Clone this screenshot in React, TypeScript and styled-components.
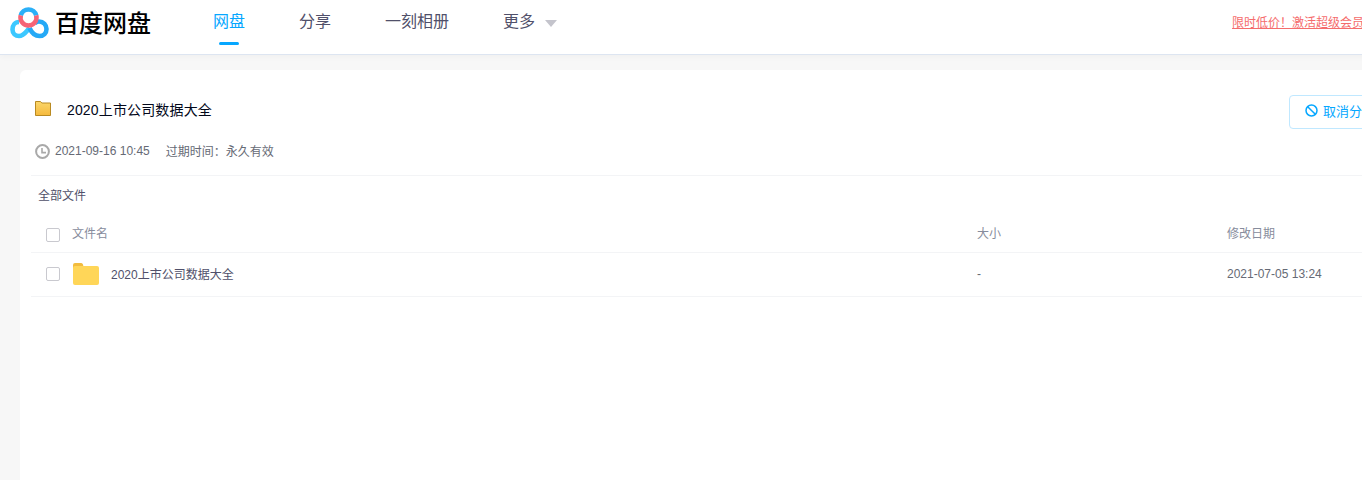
import styled, { createGlobalStyle } from "styled-components";

const CJK = `"Noto Sans CJK SC", "Liberation Sans", sans-serif`;
const MIXED = `"Liberation Sans", "Noto Sans CJK SC", sans-serif`;

const GlobalStyle = createGlobalStyle`
    html, body {
        margin: 0;
        height: 100%;
        overflow: hidden;
        background: #f7f7f7;
    }
`;

const Page = styled.div`
    width: 1440px;
    height: 480px;
    font-family: ${MIXED};
    background: #f7f7f7;
`;

const Header = styled.header`
    height: 54px;
    background: #fff;
    border-bottom: 1px solid #dde5f1;
    box-shadow: 0 2px 6px rgba(0, 0, 0, 0.03);
    display: flex;
    align-items: flex-start;
    padding-left: 10px;
`;

const Logo = styled.div`
    display: flex;
    align-items: center;
    gap: 6px;
    width: 203px;
    height: 46px;
`;

const LogoText = styled.span`
    margin-bottom: 3px;
    font-family: ${CJK};
    font-size: 24px;
    font-weight: 500;
    color: #000;
`;

const Nav = styled.nav`
    display: flex;
    gap: 54px;
`;

const NavItem = styled.a<{ $active?: boolean }>`
    position: relative;
    display: flex;
    align-items: center;
    height: 40px;
    font-family: ${CJK};
    font-size: 16px;
    color: ${p => (p.$active ? "#06a7ff" : "#50506a")};

    ${p =>
        p.$active &&
        `
        &::after {
            content: "";
            position: absolute;
            left: 6px;
            top: 42px;
            width: 20px;
            height: 3px;
            border-radius: 2px;
            background: #06a7ff;
        }
    `}
`;

const Caret = styled.i`
    width: 0;
    height: 0;
    margin: 6px 0 0 10px;
    border-left: 6px solid transparent;
    border-right: 6px solid transparent;
    border-top: 7px solid #c4c4cc;
`;

const Promo = styled.a`
    margin: 14px 0 0 675px;
    font-family: ${CJK};
    font-size: 12px;
    line-height: 16px;
    white-space: nowrap;
    color: #f56c6c;
    text-decoration: underline;
`;

const Card = styled.main`
    margin: 15px 0 0 20px;
    width: 1400px;
    height: 420px;
    box-sizing: border-box;
    padding: 25px 0 0 11px;
    background: #fff;
    border-radius: 6px;
`;

const TitleRow = styled.div`
    display: flex;
    align-items: center;
    height: 34px;
    padding-left: 4px;
`;

const SmallFolderSvg = styled.svg`
    flex: none;
    margin-bottom: 7px;
`;

const Title = styled.h1`
    margin: 0 0 6px 16px;
    width: 1222px;
    font-size: 14px;
    font-weight: 400;
    letter-spacing: 0.15px;
    color: #03081a;
`;

const CancelButton = styled.button`
    display: flex;
    align-items: center;
    gap: 5px;
    width: 110px;
    height: 34px;
    padding: 0 0 3px 15px;
    flex: none;
    background: #fff;
    border: 1px solid #c0e8ff;
    border-radius: 4px;
    font-family: ${CJK};
    font-size: 13px;
    color: #06a7ff;
    white-space: nowrap;
`;

const MetaRow = styled.div`
    display: flex;
    align-items: center;
    height: 20px;
    margin-top: 11px;
    padding-left: 4px;
    font-size: 12px;
    color: #666a75;
`;

const ClockSvg = styled.svg`
    flex: none;
    margin-top: 2px;
`;

const MetaDate = styled.span`
    margin: 1px 16px 0 5px;
`;

const Divider = styled.div`
    height: 1px;
    margin-top: 15px;
    background: #f3f4f6;
`;

const Crumb = styled.div`
    height: 40px;
    line-height: 40px;
    padding-left: 7px;
    font-size: 12px;
    color: #50506a;
`;

const Row = styled.div<{ $head?: boolean }>`
    display: grid;
    grid-template-columns: 15px 26px 890px 250px 1fr;
    align-items: center;
    height: ${p => (p.$head ? "32px" : "41px")};
    padding: 0 0 ${p => (p.$head ? "4px" : "2px")} 15px;
    border-bottom: 1px solid #f3f4f6;
    font-size: 12px;
    color: ${p => (p.$head ? "#878c9c" : "#666a75")};
`;

const Check = styled.span<{ $head?: boolean }>`
    width: 12px;
    height: 12px;
    margin-top: ${p => (p.$head ? "6px" : "0")};
    border: 1px solid #c9c9cf;
    border-radius: 2px;
`;

const NameCell = styled.div`
    grid-column: 3;
    display: flex;
    align-items: center;
    gap: 12px;
    margin-left: -15px;
`;

const RowFolderSvg = styled.svg`
    flex: none;
    margin-left: 1px;
`;

const FileName = styled.span`
    color: #50506a;
`;

function CloudLogo() {
    return (
        <svg width="39" height="32" viewBox="0 0 39 32" fill="none">
            <path
                d="M9 15 C5 15 2.5 18.5 2.5 22.5 C2.5 26.5 5.5 29 9 29 C14 29 16.5 24 19.5 21"
                stroke="#3cc8ff"
                strokeWidth="4.6"
            />
            <path
                d="M19.5 21 C21.5 25.5 25 29 29.5 29 C33.5 29 36.5 26 36.5 22 C36.5 18 33.5 14.5 29 14.5 C27.5 14.5 26.5 15 25 16"
                stroke="#25a9f6"
                strokeWidth="4.6"
            />
            <path
                d="M10.77 8.43 A8 8 0 0 1 26.23 8.43"
                stroke="#2bb0f8"
                strokeWidth="4.6"
            />
            <path
                d="M10.77 8.43 A8 8 0 1 0 26.23 8.43"
                stroke="#f66476"
                strokeWidth="4.6"
            />
        </svg>
    );
}

function ClockIcon() {
    return (
        <ClockSvg width="15" height="15" viewBox="0 0 15 15" fill="none">
            <circle cx="7.5" cy="7.5" r="6.4" stroke="#a9a9a9" strokeWidth="2" />
            <path d="M7 4 V8.6 H11" stroke="#a9a9a9" strokeWidth="1.6" />
        </ClockSvg>
    );
}

function BanIcon() {
    return (
        <svg width="13" height="13" viewBox="0 0 13 13" fill="none">
            <circle cx="6.5" cy="6.5" r="5.5" stroke="#06a7ff" strokeWidth="1.5" />
            <path d="M2.7 2.7 L10.3 10.3" stroke="#06a7ff" strokeWidth="1.5" />
        </svg>
    );
}

function SmallFolder() {
    return (
        <SmallFolderSvg width="16" height="15" viewBox="0 0 16 15">
            <defs>
                <linearGradient id="smallFolder" x1="0" y1="0" x2="0" y2="1">
                    <stop offset="0" stopColor="#fbd76c" />
                    <stop offset="1" stopColor="#f5b93c" />
                </linearGradient>
            </defs>
            <path
                d="M.5.5 H5.5 L6.8 2 H15.5 V14.5 H.5 Z"
                fill="url(#smallFolder)"
                stroke="#b98a22"
            />
        </SmallFolderSvg>
    );
}

function RowFolder() {
    return (
        <RowFolderSvg width="26" height="22" viewBox="0 0 26 22">
            <path d="M0 2 a2 2 0 0 1 2-2 H8 a2 2 0 0 1 2 1.5 L11 6 H0 Z" fill="#f2bc3e" />
            <rect x="0" y="3" width="26" height="19" rx="2" fill="#ffd658" />
        </RowFolderSvg>
    );
}

export default function App() {
    return (
        <Page>
            <GlobalStyle />
            <Header>
                <Logo>
                    <CloudLogo />
                    <LogoText>百度网盘</LogoText>
                </Logo>
                <Nav>
                    <NavItem $active>网盘</NavItem>
                    <NavItem>分享</NavItem>
                    <NavItem>一刻相册</NavItem>
                    <NavItem>
                        更多
                        <Caret />
                    </NavItem>
                </Nav>
                <Promo>限时低价！激活超级会员</Promo>
            </Header>
            <Card>
                <TitleRow>
                    <SmallFolder />
                    <Title>2020上市公司数据大全</Title>
                    <CancelButton>
                        <BanIcon />
                        取消分享
                    </CancelButton>
                </TitleRow>
                <MetaRow>
                    <ClockIcon />
                    <MetaDate>2021-09-16 10:45</MetaDate>
                    过期时间：永久有效
                </MetaRow>
                <Divider />
                <Crumb>全部文件</Crumb>
                <Row $head>
                    <Check $head />
                    <NameCell>文件名</NameCell>
                    <span>大小</span>
                    <span>修改日期</span>
                </Row>
                <Row>
                    <Check />
                    <NameCell>
                        <RowFolder />
                        <FileName>2020上市公司数据大全</FileName>
                    </NameCell>
                    <span>-</span>
                    <span>2021-07-05 13:24</span>
                </Row>
            </Card>
        </Page>
    );
}
